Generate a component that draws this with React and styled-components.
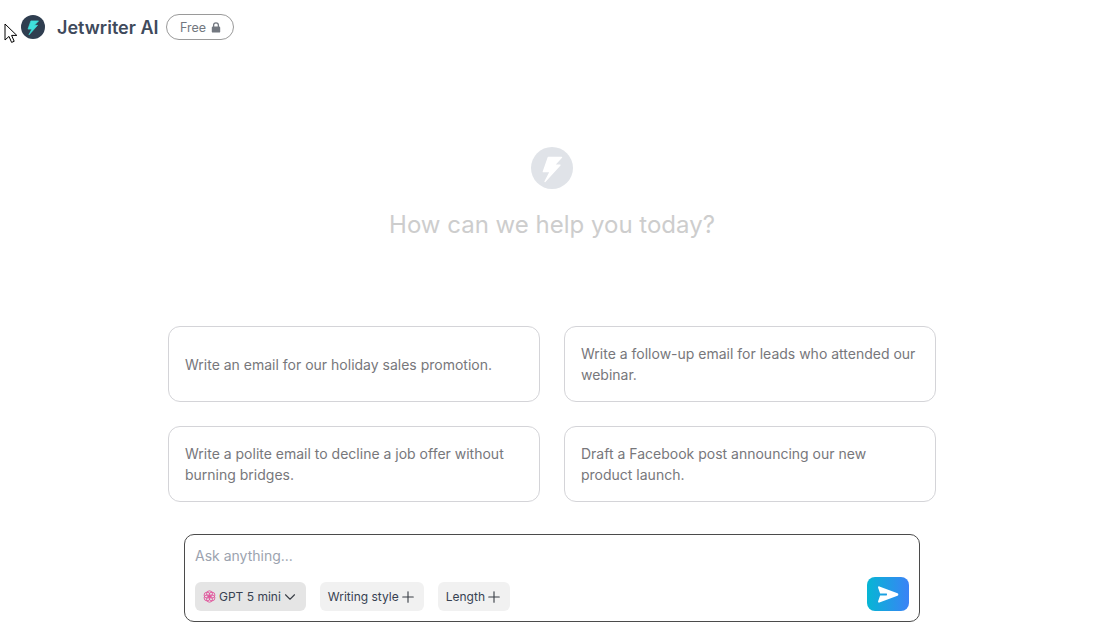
import React from "react";
import styled, { createGlobalStyle } from "styled-components";
import { ChevronDown, Plus } from "lucide-react";

const GlobalStyle = createGlobalStyle`
  html, body {
    margin: 0;
    padding: 0;
    background: #fff;
    overflow: hidden;
  }
  * {
    box-sizing: border-box;
  }
  body {
    font-family: Inter, "Liberation Sans", sans-serif;
  }
`;

const prompts = [
  "Write an email for our holiday sales promotion.",
  "Write a follow-up email for leads who attended our webinar.",
  "Write a polite email to decline a job offer without burning bridges.",
  "Draft a Facebook post announcing our new product launch.",
];

const Bolt = ({ color }) => (
  <svg viewBox="0 0 24 24" width="100%" height="100%">
    <path
      fill={color}
      stroke={color}
      strokeWidth="0.7"
      strokeLinejoin="round"
      d="M9.9 5.9H17.5L13.4 10.3H16.6L8 19.8 10.9 14.1H7z"
    />
  </svg>
);

const Page = styled.div`
  position: relative;
  width: 1104px;
  height: 634px;
  overflow: hidden;
`;

const Header = styled.header`
  display: flex;
  align-items: center;
  height: 26px;
  margin-top: 14px;
  padding-left: 21px;
`;

const Logo = styled.div`
  width: 24px;
  height: 24px;
  border-radius: 50%;
  background: #2f3e50;
  margin-right: 12px;
`;

const Title = styled.h1`
  margin: 0 8px 0 0;
  font-size: 18px;
  font-weight: 600;
  color: #3f4a5c;
  white-space: nowrap;
`;

const Badge = styled.div`
  display: flex;
  align-items: center;
  justify-content: center;
  gap: 5px;
  width: 68px;
  height: 26px;
  border: 1px solid #9a9a9a;
  border-radius: 13px;
  font-size: 12.5px;
  color: #737880;
`;

const Hero = styled.section`
  display: flex;
  flex-direction: column;
  align-items: center;
  margin-top: 107px;
`;

const HeroIcon = styled.div`
  width: 42px;
  height: 42px;
  border-radius: 50%;
  background: #e0e3e8;
`;

const HeroText = styled.h2`
  margin: 20px 0 0;
  font-size: 24px;
  line-height: 32px;
  font-weight: 400;
  color: #cdcdcd;
`;

const Grid = styled.div`
  display: grid;
  grid-template-columns: 372px 372px;
  grid-auto-rows: 76px;
  gap: 24px;
  justify-content: center;
  margin-top: 85px;
`;

const Card = styled.button`
  display: flex;
  align-items: center;
  padding: 0 16px;
  border: 1px solid #d4d4d8;
  border-radius: 12px;
  background: #fff;
  font-family: inherit;
  font-size: 14px;
  line-height: 21px;
  color: #77777b;
  text-align: left;
`;

const Composer = styled.div`
  width: 736px;
  height: 88px;
  margin: 32px auto 0;
  padding: 10px 10px 10px;
  border: 1px solid #4b4b4b;
  border-radius: 10px;
`;

const Placeholder = styled.div`
  height: 21px;
  font-size: 14px;
  line-height: 21px;
  color: #9ca3af;
`;

const ComposerBar = styled.div`
  display: flex;
  align-items: flex-end;
  justify-content: space-between;
  margin-top: 11px;
  height: 34px;
`;

const Chips = styled.div`
  display: flex;
  gap: 14px;
`;

const Chip = styled.div`
  display: flex;
  align-items: center;
  gap: 2px;
  height: 29px;
  padding: 0 8px;
  border-radius: 6px;
  background: ${(p) => (p.$active ? "#e5e5e5" : "#f1f1f1")};
  font-size: 12px;
  color: #374151;
  white-space: nowrap;
`;

const ChipIcon = styled.span`
  display: flex;
  justify-content: center;
  width: 15px;
  color: #3a3f47;
`;

const ModelMark = styled.svg`
  width: 13px;
  height: 13px;
  flex: none;
  margin-right: 1px;
`;

const SendButton = styled.button`
  display: flex;
  align-items: center;
  justify-content: center;
  width: 42px;
  height: 34px;
  padding: 0;
  border: 0;
  border-radius: 8px;
  background: linear-gradient(90deg, #06b6d4, #3b82f6);
`;

const Cursor = styled.svg`
  position: absolute;
  left: 4px;
  top: 23px;
  width: 14px;
  height: 21px;
`;

const App = () => {
  return (
    <Page>
      <GlobalStyle />
      <Header>
        <Logo>
          <Bolt color="#3fe0dc" />
        </Logo>
        <Title>Jetwriter AI</Title>
        <Badge>
          Free
          <svg width="10" height="11" viewBox="0 0 10 11">
            <path d="M2.6 5V3.3a2.4 2.4 0 0 1 4.8 0V5" fill="none" stroke="#737880" strokeWidth="1.3" />
            <rect x="0.8" y="4.6" width="8.4" height="6" rx="1.2" fill="#737880" />
          </svg>
        </Badge>
      </Header>
      <Hero>
        <HeroIcon>
          <Bolt color="#fff" />
        </HeroIcon>
        <HeroText>How can we help you today?</HeroText>
      </Hero>
      <Grid>
        {prompts.map((text) => (
          <Card key={text}>{text}</Card>
        ))}
      </Grid>
      <Composer>
        <Placeholder>Ask anything...</Placeholder>
        <ComposerBar>
          <Chips>
            <Chip $active>
              <ModelMark viewBox="0 0 24 24" fill="none" stroke="#e0559c" strokeWidth="1.7">
                <circle cx="12" cy="7" r="5.5" />
                <circle cx="12" cy="17" r="5.5" />
                <circle cx="7.5" cy="9.5" r="5.5" />
                <circle cx="16.5" cy="9.5" r="5.5" />
                <circle cx="7.5" cy="14.5" r="5.5" />
                <circle cx="16.5" cy="14.5" r="5.5" />
              </ModelMark>
              GPT 5 mini
              <ChipIcon>
                <ChevronDown size={18} strokeWidth={1.5} style={{ flex: "none" }} />
              </ChipIcon>
            </Chip>
            <Chip>
              Writing style
              <ChipIcon>
                <Plus size={18} strokeWidth={1.5} style={{ flex: "none" }} />
              </ChipIcon>
            </Chip>
            <Chip>
              Length
              <ChipIcon>
                <Plus size={18} strokeWidth={1.5} style={{ flex: "none" }} />
              </ChipIcon>
            </Chip>
          </Chips>
          <SendButton aria-label="Send">
            <svg width="22" height="21" viewBox="0 0 24 20">
              <path
                fill="#fff"
                d="M2.6 1.2 22.4 8.6c1.2.5 1.2 2.2 0 2.7L2.6 18.8c-.9.3-1.7-.5-1.4-1.4L3.4 11h7.1c.6 0 .6-2 0-2H3.4L1.2 2.6C.9 1.7 1.7.9 2.6 1.2z"
              />
            </svg>
          </SendButton>
        </ComposerBar>
      </Composer>
      <Cursor viewBox="0 0 14 21">
        <path d="M1 1v16l4-3.6 2.6 6 2.6-1.1-2.6-5.9h5.2z" fill="#fff" stroke="#000" strokeWidth="1" />
      </Cursor>
    </Page>
  );
};

export default App;
